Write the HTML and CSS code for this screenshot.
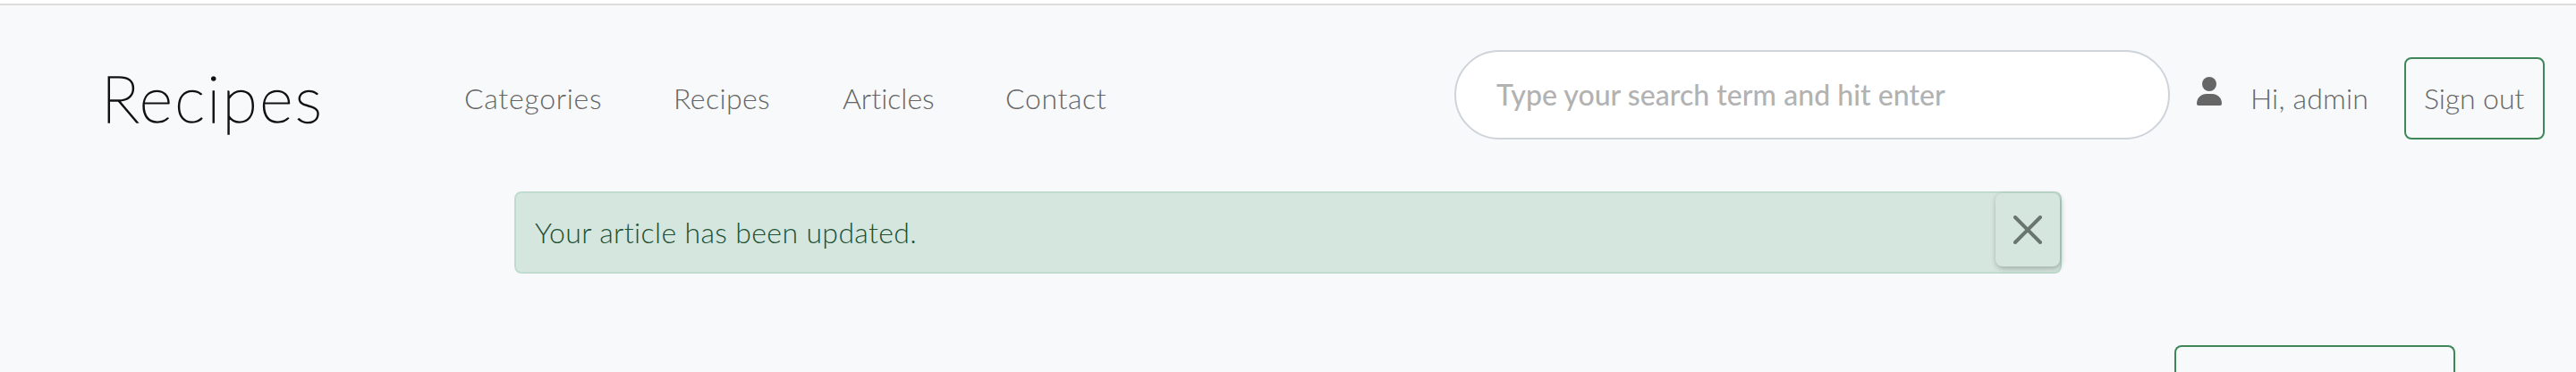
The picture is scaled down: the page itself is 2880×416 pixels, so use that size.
FILE: index.html
```html
<!DOCTYPE html>
<html lang="en">
<head>
<meta charset="utf-8">
<title>Recipes</title>
<link rel="stylesheet" href="styles.css">
</head>
<body>
<header class="header">
  <a class="brand">Recipes</a>
  <nav class="nav">
    <a class="nav-categories">Categories</a>
    <a class="nav-recipes">Recipes</a>
    <a class="nav-articles">Articles</a>
    <a class="nav-contact">Contact</a>
  </nav>
  <div class="search"><span>Type your search term and hit enter</span></div>
  <svg class="user-icon" viewBox="0 0 28 32"><circle cx="14" cy="8" r="8"/><path d="M0 30C0 23 5 19 11 19H17C23 19 28 23 28 30Q28 32 26 32H2Q0 32 0 30Z"/></svg>
  <span class="greeting">Hi, admin</span>
  <a class="signout"><span>Sign out</span></a>
</header>
<main class="content">
  <div class="alert">
    <span class="alert-text">Your article has been updated.</span>
    <button class="close" aria-label="Close"><svg viewBox="0 0 32 32"><path d="M2 2L30 30M30 2L2 30"/></svg></button>
  </div>
  <div class="action"></div>
</main>
</body>
</html>
```
FILE: styles.css
```css
* { box-sizing: border-box; }
body {
  margin: 0;
  height: 416px;
  overflow: hidden;
  background: #f8f9fb;
  border-top: 4px solid #fff;
  font: 300 32px/40px Lato, sans-serif;
  font-variant-ligatures: none;
  color: #666;
  white-space: nowrap;
}
.header {
  display: flex;
  align-items: flex-start;
  height: 208px;
  padding-left: 113px;
  border-top: 2px solid #dcdcdc;
}
.brand {
  width: 406px;
  margin-top: 59px;
  font-size: 72px;
  line-height: 88px;
  font-weight: 100;
  letter-spacing: 2.4px;
  -webkit-text-stroke: 1.6px #111;
  color: #111;
}
.nav { display: flex; width: 1107px; margin-top: 84px; }
.nav-categories { width: 234px; letter-spacing: 0.7px; }
.nav-recipes { width: 189px; letter-spacing: 0.4px; }
.nav-articles { width: 182px; }
.nav-contact { letter-spacing: 0.6px; }
.search {
  width: 800px;
  height: 100px;
  margin-top: 50px;
  padding: 26px 45px;
  background: #fff;
  border: 2px solid #ced4da;
  border-radius: 50px;
  font-weight: 500;
  line-height: 44px;
  letter-spacing: 0.04px;
  color: #b2b2b2;
}
.user-icon { width: 28px; height: 32px; margin: 80px 0 0 30px; fill: #666; }
.greeting { width: 172px; margin: 84px 0 0 32px; letter-spacing: 0.2px; }
.signout {
  width: 157px;
  height: 92px;
  margin-top: 58px;
  padding: 24px 20px;
  border: 2px solid #3f8758;
  border-radius: 8px;
  letter-spacing: -0.1px;
}
.content { display: flex; flex-direction: column; height: 202px; overflow: hidden; }
.alert {
  display: flex;
  flex-shrink: 0;
  width: 1730px;
  height: 92px;
  margin: 0 0 0 575px;
  border: 2px solid #c0dccf;
  border-radius: 8px;
  background: #d5e6de;
  color: #235034;
}
.header + .content { padding-top: 2px; height: 204px; }
.alert-text { flex: 1; padding: 24px 0 0 21px; letter-spacing: 0.36px; }
.close {
  display: grid;
  place-items: center;
  width: 72px;
  height: 82px;
  padding: 0;
  border: 0;
  border-radius: 8px;
  background: #d5e6de;
  box-shadow: 1px 2px 6px rgba(0, 0, 0, .28);
}
.close svg { width: 32px; height: 32px; fill: none; stroke: #69756f; stroke-width: 4; stroke-linecap: round; }
.action {
  width: 314px;
  flex: 0 0 30px;
  margin: 80px 0 0 2431px;
  border: 2px solid #3f8758;
  border-bottom: 0;
  border-radius: 8px 8px 0 0;
}
```
